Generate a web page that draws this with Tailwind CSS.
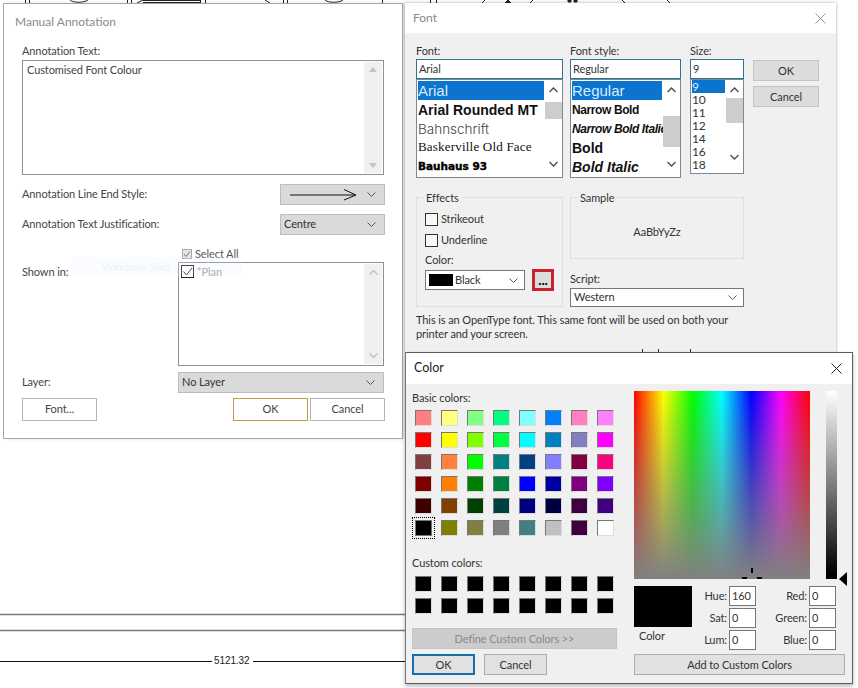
<!DOCTYPE html>
<html lang="en">
<head>
  <meta charset="UTF-8">
  <title>Manual Annotation - Font - Color</title>
  <script src="https://cdn.jsdelivr.net/npm/@tailwindcss/browser@4"></script>
</head>
<body class="bg-white overflow-hidden font-['Lato','Noto_Sans',sans-serif] text-[11px] tracking-[-0.1px] text-[#222]">
<div class="relative w-[858px] h-[688px] overflow-hidden bg-white">

  <!-- drawing behind the dialogs -->
  <svg class="absolute inset-0" width="858" height="688" fill="none" stroke="#222">
    <path d="M25.5 0v3M29.5 0v3M70 0c3 3 14 3 18 0M127.5 0v3M131.5 0v3M137 3l6-3M143 0.5h57M143 2.5h57M200.5 0v3M205.5 0v3M265 0l5 3M283.5 0v3M287.5 0v3M325 0c3 3 14 3 18 0M382.5 0v3"/>
    <path d="M430.5 0v3M436.5 0v3M485 0l-3 3M533 0l-3 3M622 0l3 3M667 0l3 3"/>
    <path d="M508 0l-3 3h6zM568 0h3v2h-3zM574 0h3v2h-3z" fill="#222"/>
    <path d="M0 614.5H405M0 630.5H405" stroke="#777" stroke-width="1.5"/>
    <path d="M0 661.5H212M253 661.5H405" stroke="#111"/>
    <text x="214" y="664" fill="#222" stroke="none" font-family="Liberation Sans" font-size="10">5121.32</text>
  </svg>

  <!-- Manual Annotation -->
  <div class="absolute left-[3px] top-[3px] w-[400px] h-[436px] bg-white border border-[#a6a6a6] shadow-[3px_0_4px_rgba(0,0,0,0.12)] pl-[18px] pr-[17px]">
    <div class="h-[27px] -ml-[7px] pt-[9px] leading-[18px] text-[12px] tracking-normal text-[#8a8a8a]">Manual Annotation</div>
    <div class="h-[18px] mt-[11px] leading-[18px] text-[#444]">Annotation Text:</div>
    <div class="h-[115px] border border-[#8f8f8f] flex justify-between mr-[1px]">
      <div class="pl-[4px] pt-[1px] leading-[16px] text-[#444]">Customised Font Colour</div>
      <div class="w-[18px] m-px bg-[#f0f0f0] flex flex-col items-center justify-between py-[5px]">
        <svg width="8" height="5"><path d="M0 5L4 0 8 5z" fill="#c4c4c4"/></svg>
        <svg width="8" height="5"><path d="M0 0L4 5 8 0z" fill="#c4c4c4"/></svg>
      </div>
    </div>
    <div class="flex items-center justify-between h-[21px] mt-[9px]">
      <span class="text-[#444]">Annotation Line End Style:</span>
      <div class="w-[105px] h-[21px] bg-[#dadada] border border-[#bdbdbd] flex items-center justify-between px-[8px]">
        <svg width="70" height="13" fill="none" stroke="#111"><path d="M1 7H66M55 1.5L67 7 55 12"/></svg>
        <svg width="9" height="5" fill="none" stroke="#555"><path d="M0.5 0.5L4.5 4.5 8.5 0.5"/></svg>
      </div>
    </div>
    <div class="flex items-center justify-between h-[21px] mt-[9px]">
      <span class="text-[#444]">Annotation Text Justification:</span>
      <div class="w-[105px] h-[21px] bg-[#dadada] border border-[#bdbdbd] flex items-center justify-between pl-[3px] pr-[8px]">
        <span class="text-[#333]">Centre</span>
        <svg width="9" height="5" fill="none" stroke="#555"><path d="M0.5 0.5L4.5 4.5 8.5 0.5"/></svg>
      </div>
    </div>
    <div class="flex h-[120px] mt-[11px]">
      <div class="w-[156px] pt-[17px] leading-[18px] text-[#444]">Shown in:</div>
      <div class="w-[206px]">
        <div class="h-[16px] pl-[4px] flex items-center gap-[3px] text-[#555]">
          <span class="w-[10px] h-[10px] border border-[#a8a8a8] bg-[#e4e4e4] flex items-center justify-center">
            <svg width="8" height="8" fill="none" stroke="#777"><path d="M1 4L3 6.5 7 1.5"/></svg>
          </span>
          <span>Select All</span>
        </div>
        <div class="h-[104px] border border-[#8f8f8f] flex justify-between">
          <div class="pl-[2px] pt-[2px] flex items-start gap-[3px] text-[#a0a0a0]">
            <span class="w-[13px] h-[13px] border border-[#222] flex items-center justify-center">
              <svg width="11" height="11" fill="none" stroke="#222"><path d="M1.5 5.5L4.5 9 10 2"/></svg>
            </span>
            <span class="leading-[14px]">*Plan</span>
          </div>
          <div class="w-[18px] m-px bg-[#f0f0f0] flex flex-col items-center justify-between py-[6px]">
            <svg width="9" height="5" fill="none" stroke="#c4c4c4" stroke-width="1.5"><path d="M0.5 4.5L4.5 0.5 8.5 4.5"/></svg>
            <svg width="9" height="5" fill="none" stroke="#c4c4c4" stroke-width="1.5"><path d="M0.5 0.5L4.5 4.5 8.5 0.5"/></svg>
          </div>
        </div>
      </div>
    </div>
    <div class="flex items-center h-[21px] mt-[6px]">
      <span class="w-[156px] text-[#444]">Layer:</span>
      <div class="w-[206px] h-[21px] bg-[#dadada] border border-[#bdbdbd] flex items-center justify-between pl-[3px] pr-[8px]">
        <span class="text-[#333]">No Layer</span>
        <svg width="9" height="5" fill="none" stroke="#555"><path d="M0.5 0.5L4.5 4.5 8.5 0.5"/></svg>
      </div>
    </div>
    <div class="flex h-[23px] mt-[5px]">
      <button class="w-[75px] border border-[#b4b4b4] text-[#444]">Font...</button>
      <button class="w-[75px] ml-[136px] border border-[#c49a45] text-[#444]">OK</button>
      <button class="w-[75px] ml-[2px] border border-[#b4b4b4] text-[#444]">Cancel</button>
    </div>
  </div>
  <!-- ghost of a snip overlay -->
  <div class="absolute left-[72px] top-[257px] w-[170px] h-[19px] pl-[30px] leading-[19px] bg-[#e8f0fd]/20 text-[#e6edfa]/70 pointer-events-none">Windows Snip</div>

  <!-- Font -->
  <div class="absolute left-[405px] top-[3px] w-[431px] h-[350px] bg-[#f0f0f0] shadow-[0_0_3px_rgba(0,0,0,0.35)] text-[#333]">
    <div class="h-[30px] bg-white flex items-center justify-between pl-[8px] pr-[10px] text-[12px] tracking-normal text-[#888]">
      <span>Font</span>
      <svg width="11" height="11" fill="none" stroke="#999"><path d="M0.5 0.5L10.5 10.5M10.5 0.5L0.5 10.5"/></svg>
    </div>
    <div class="flex pl-[11px] pt-[9px]">
      <div class="w-[147px]">
        <div class="h-[17px] leading-[17px]">Font:</div>
        <div class="h-[20px] border border-[#2f7492] bg-white pl-[2px] leading-[18px]">Arial</div>
        <div class="h-[99px] border border-[#7a8a94] bg-white flex tracking-normal">
          <div class="w-[128px] pl-px pt-[1px]">
            <div class="h-[19px] w-[126px] bg-[#0a74cf] text-[#d8ecff] font-['Liberation_Sans'] text-[15px] leading-[19px]">Arial</div>
            <div class="h-[20px] font-['Liberation_Sans'] font-bold text-[14px] text-[#111] leading-[20px] whitespace-nowrap">Arial Rounded MT</div>
            <div class="h-[19px] font-['Inter'] font-light text-[13.5px] text-[#444] leading-[19px]">Bahnschrift</div>
            <div class="h-[19px] font-['Liberation_Serif'] text-[13px] text-[#111] leading-[15px] tracking-[0.2px] whitespace-nowrap">Baskerville Old Face</div>
            <div class="h-[19px] font-['DejaVu_Sans'] font-bold text-[10.5px] text-black leading-[17px] [-webkit-text-stroke:0.4px_black] whitespace-nowrap">Bauhaus 93</div>
          </div>
          <div class="w-[17px] flex flex-col items-center pt-[7px]">
            <svg width="9" height="6" fill="none" stroke="#555" stroke-width="1.5"><path d="M0.5 5L4.5 1 8.5 5"/></svg>
            <div class="w-full h-[17px] bg-[#cdcdcd] mt-[9px]"></div>
            <svg class="mt-[42px]" width="9" height="6" fill="none" stroke="#555" stroke-width="1.5"><path d="M0.5 1L4.5 5 8.5 1"/></svg>
          </div>
        </div>
      </div>
      <div class="w-[111px] ml-[7px]">
        <div class="h-[17px] leading-[17px]">Font style:</div>
        <div class="h-[20px] border border-[#2f7492] bg-white pl-[2px] leading-[18px]">Regular</div>
        <div class="h-[99px] border border-[#7a8a94] bg-white flex tracking-normal">
          <div class="w-[92px] pl-px pt-[1px] overflow-hidden font-['Liberation_Sans'] text-[#111]">
            <div class="h-[19px] w-[90px] bg-[#0a74cf] text-[#d8ecff] text-[15px] leading-[19px]">Regular</div>
            <div class="h-[20px] font-bold text-[12px] leading-[20px] tracking-[-0.4px] whitespace-nowrap">Narrow Bold</div>
            <div class="h-[19px] font-bold italic text-[12px] leading-[19px] tracking-[-0.4px] whitespace-nowrap">Narrow Bold Italic</div>
            <div class="h-[19px] font-bold text-[14px] leading-[19px]">Bold</div>
            <div class="h-[19px] font-bold italic text-[14px] leading-[19px] whitespace-nowrap">Bold Italic</div>
          </div>
          <div class="w-[17px] flex flex-col items-center pt-[7px]">
            <svg width="9" height="6" fill="none" stroke="#555" stroke-width="1.5"><path d="M0.5 5L4.5 1 8.5 5"/></svg>
            <div class="w-full h-[31px] bg-[#cdcdcd] mt-[23px]"></div>
            <svg class="mt-[14px]" width="9" height="6" fill="none" stroke="#555" stroke-width="1.5"><path d="M0.5 1L4.5 5 8.5 1"/></svg>
          </div>
        </div>
      </div>
      <div class="w-[54px] ml-[9px]">
        <div class="h-[17px] leading-[17px]">Size:</div>
        <div class="h-[20px] border border-[#2f7492] bg-white pl-[2px] leading-[18px]">9</div>
        <div class="h-[95px] border border-[#7a8a94] bg-white flex">
          <div class="w-[35px] pl-px text-[12px] leading-[13px] text-[#333]">
            <div class="w-[33px] h-[13px] bg-[#0a74cf] text-[#d8ecff]">9</div>
            <div>10</div><div>11</div><div>12</div><div>14</div><div>16</div><div>18</div>
          </div>
          <div class="w-[17px] flex flex-col items-center pt-[7px]">
            <svg width="9" height="6" fill="none" stroke="#555" stroke-width="1.5"><path d="M0.5 5L4.5 1 8.5 5"/></svg>
            <div class="w-full h-[25px] bg-[#cdcdcd] mt-[5px]"></div>
            <svg class="mt-[31px]" width="9" height="6" fill="none" stroke="#555" stroke-width="1.5"><path d="M0.5 1L4.5 5 8.5 1"/></svg>
          </div>
        </div>
      </div>
      <div class="w-[66px] ml-[9px] pt-[18px] flex flex-col gap-[5px]">
        <button class="h-[21px] bg-[#dcdcdc] border border-[#c4c4c4] leading-[19px]">OK</button>
        <button class="h-[21px] bg-[#dcdcdc] border border-[#c4c4c4] leading-[19px]">Cancel</button>
      </div>
    </div>
    <div class="flex pl-[11px] mt-[19px]">
      <div class="relative w-[147px] h-[110px] border border-[#dedede] pl-[8px] pt-[15px]">
        <span class="absolute left-[7px] -top-[8px] px-[2px] bg-[#f0f0f0] leading-[16px]">Effects</span>
        <div class="flex items-center gap-[3px] h-[13px]">
          <span class="w-[13px] h-[13px] border border-[#333] bg-[#f8f8f8]"></span><span>Strikeout</span>
        </div>
        <div class="flex items-center gap-[3px] h-[13px] mt-[8px]">
          <span class="w-[13px] h-[13px] border border-[#333] bg-[#f8f8f8]"></span><span>Underline</span>
        </div>
        <div class="h-[14px] leading-[14px] mt-[6px]">Color:</div>
        <div class="flex items-center mt-[2px]">
          <div class="w-[100px] h-[20px] border border-[#777] bg-white flex items-center pl-[3px] pr-[6px]">
            <span class="w-[24px] h-[12px] bg-black"></span>
            <span class="ml-[2px] grow leading-[16px]">Black</span>
            <svg width="9" height="5" fill="none" stroke="#555"><path d="M0.5 0.5L4.5 4.5 8.5 0.5"/></svg>
          </div>
          <button class="w-[22px] h-[22px] ml-[7px] bg-[#dcdcdc] border-[3px] border-[#c8202e] font-bold text-black text-[14px] leading-[16px]">...</button>
        </div>
      </div>
      <div class="w-[174px] ml-[7px]">
        <div class="relative h-[62px] border border-[#dedede] flex items-center justify-center">
          <span class="absolute left-[7px] -top-[8px] px-[2px] bg-[#f0f0f0] leading-[16px]">Sample</span>
          <span class="mt-[9px]">AaBbYyZz</span>
        </div>
        <div class="h-[15px] leading-[15px] mt-[12px]">Script:</div>
        <div class="h-[19px] mt-[2px] border border-[#777] bg-white flex items-center justify-between pl-[3px] pr-[6px]">
          <span>Western</span>
          <svg width="9" height="5" fill="none" stroke="#555"><path d="M0.5 0.5L4.5 4.5 8.5 0.5"/></svg>
        </div>
      </div>
    </div>
    <p class="ml-[11px] mt-[6px] w-[330px] leading-[14px]">This is an OpenType font. This same font will be used on both your printer and your screen.</p>
  </div>
  <svg class="absolute left-[640px] top-[349px]" width="52" height="4" stroke="#333"><path d="M2.5 0v4M18.5 0v4M50.5 0v4"/></svg>

  <!-- Color -->
  <div class="absolute left-[405px] top-[352px] w-[448px] h-[332px] bg-[#f0f0f0] border border-[#5c5c5c] border-l-[#7a7a7a] shadow-[0_2px_4px_rgba(0,0,0,0.3)] text-[#333]">
    <div class="h-[31px] bg-white flex items-center justify-between pl-[8px] pr-[10px] text-[#222] text-[12.5px] tracking-normal">
      <span>Color</span>
      <svg width="11" height="11" fill="none" stroke="#222"><path d="M0.5 0.5L10.5 10.5M10.5 0.5L0.5 10.5"/></svg>
    </div>
    <div class="flex">
      <div class="w-[228px] pl-[6px]">
        <div class="h-[14px] leading-[14px] mt-[7px]">Basic colors:</div>
        <div class="grid grid-cols-[repeat(8,17px)] auto-rows-[16px] gap-x-[9px] gap-y-[6px] ml-[3px] mt-[5px]">
          <i class="border border-t-[#777] border-l-[#777] border-r-[#ddd] border-b-[#ddd] bg-[#ff8080]"></i>
          <i class="border border-t-[#777] border-l-[#777] border-r-[#ddd] border-b-[#ddd] bg-[#ffff80]"></i>
          <i class="border border-t-[#777] border-l-[#777] border-r-[#ddd] border-b-[#ddd] bg-[#80ff80]"></i>
          <i class="border border-t-[#777] border-l-[#777] border-r-[#ddd] border-b-[#ddd] bg-[#00ff80]"></i>
          <i class="border border-t-[#777] border-l-[#777] border-r-[#ddd] border-b-[#ddd] bg-[#80ffff]"></i>
          <i class="border border-t-[#777] border-l-[#777] border-r-[#ddd] border-b-[#ddd] bg-[#0080ff]"></i>
          <i class="border border-t-[#777] border-l-[#777] border-r-[#ddd] border-b-[#ddd] bg-[#ff80c0]"></i>
          <i class="border border-t-[#777] border-l-[#777] border-r-[#ddd] border-b-[#ddd] bg-[#ff80ff]"></i>
          <i class="border border-t-[#777] border-l-[#777] border-r-[#ddd] border-b-[#ddd] bg-[#ff0000]"></i>
          <i class="border border-t-[#777] border-l-[#777] border-r-[#ddd] border-b-[#ddd] bg-[#ffff00]"></i>
          <i class="border border-t-[#777] border-l-[#777] border-r-[#ddd] border-b-[#ddd] bg-[#80ff00]"></i>
          <i class="border border-t-[#777] border-l-[#777] border-r-[#ddd] border-b-[#ddd] bg-[#00ff40]"></i>
          <i class="border border-t-[#777] border-l-[#777] border-r-[#ddd] border-b-[#ddd] bg-[#00ffff]"></i>
          <i class="border border-t-[#777] border-l-[#777] border-r-[#ddd] border-b-[#ddd] bg-[#0080c0]"></i>
          <i class="border border-t-[#777] border-l-[#777] border-r-[#ddd] border-b-[#ddd] bg-[#8080c0]"></i>
          <i class="border border-t-[#777] border-l-[#777] border-r-[#ddd] border-b-[#ddd] bg-[#ff00ff]"></i>
          <i class="border border-t-[#777] border-l-[#777] border-r-[#ddd] border-b-[#ddd] bg-[#804040]"></i>
          <i class="border border-t-[#777] border-l-[#777] border-r-[#ddd] border-b-[#ddd] bg-[#ff8040]"></i>
          <i class="border border-t-[#777] border-l-[#777] border-r-[#ddd] border-b-[#ddd] bg-[#00ff00]"></i>
          <i class="border border-t-[#777] border-l-[#777] border-r-[#ddd] border-b-[#ddd] bg-[#008080]"></i>
          <i class="border border-t-[#777] border-l-[#777] border-r-[#ddd] border-b-[#ddd] bg-[#004080]"></i>
          <i class="border border-t-[#777] border-l-[#777] border-r-[#ddd] border-b-[#ddd] bg-[#8080ff]"></i>
          <i class="border border-t-[#777] border-l-[#777] border-r-[#ddd] border-b-[#ddd] bg-[#800040]"></i>
          <i class="border border-t-[#777] border-l-[#777] border-r-[#ddd] border-b-[#ddd] bg-[#ff0080]"></i>
          <i class="border border-t-[#777] border-l-[#777] border-r-[#ddd] border-b-[#ddd] bg-[#800000]"></i>
          <i class="border border-t-[#777] border-l-[#777] border-r-[#ddd] border-b-[#ddd] bg-[#ff8000]"></i>
          <i class="border border-t-[#777] border-l-[#777] border-r-[#ddd] border-b-[#ddd] bg-[#008000]"></i>
          <i class="border border-t-[#777] border-l-[#777] border-r-[#ddd] border-b-[#ddd] bg-[#008040]"></i>
          <i class="border border-t-[#777] border-l-[#777] border-r-[#ddd] border-b-[#ddd] bg-[#0000ff]"></i>
          <i class="border border-t-[#777] border-l-[#777] border-r-[#ddd] border-b-[#ddd] bg-[#0000a0]"></i>
          <i class="border border-t-[#777] border-l-[#777] border-r-[#ddd] border-b-[#ddd] bg-[#800080]"></i>
          <i class="border border-t-[#777] border-l-[#777] border-r-[#ddd] border-b-[#ddd] bg-[#8000ff]"></i>
          <i class="border border-t-[#777] border-l-[#777] border-r-[#ddd] border-b-[#ddd] bg-[#400000]"></i>
          <i class="border border-t-[#777] border-l-[#777] border-r-[#ddd] border-b-[#ddd] bg-[#804000]"></i>
          <i class="border border-t-[#777] border-l-[#777] border-r-[#ddd] border-b-[#ddd] bg-[#004000]"></i>
          <i class="border border-t-[#777] border-l-[#777] border-r-[#ddd] border-b-[#ddd] bg-[#004040]"></i>
          <i class="border border-t-[#777] border-l-[#777] border-r-[#ddd] border-b-[#ddd] bg-[#000080]"></i>
          <i class="border border-t-[#777] border-l-[#777] border-r-[#ddd] border-b-[#ddd] bg-[#000040]"></i>
          <i class="border border-t-[#777] border-l-[#777] border-r-[#ddd] border-b-[#ddd] bg-[#400040]"></i>
          <i class="border border-t-[#777] border-l-[#777] border-r-[#ddd] border-b-[#ddd] bg-[#400080]"></i>
          <i class="border border-[#777] bg-black outline-1 outline-dotted outline-black outline-offset-2"></i>
          <i class="border border-t-[#777] border-l-[#777] border-r-[#ddd] border-b-[#ddd] bg-[#808000]"></i>
          <i class="border border-t-[#777] border-l-[#777] border-r-[#ddd] border-b-[#ddd] bg-[#808040]"></i>
          <i class="border border-t-[#777] border-l-[#777] border-r-[#ddd] border-b-[#ddd] bg-[#808080]"></i>
          <i class="border border-t-[#777] border-l-[#777] border-r-[#ddd] border-b-[#ddd] bg-[#408080]"></i>
          <i class="border border-t-[#777] border-l-[#777] border-r-[#ddd] border-b-[#ddd] bg-[#c0c0c0]"></i>
          <i class="border border-t-[#777] border-l-[#777] border-r-[#ddd] border-b-[#ddd] bg-[#400040]"></i>
          <i class="border border-t-[#777] border-l-[#777] border-r-[#ddd] border-b-[#ddd] bg-[#ffffff]"></i>
        </div>
        <div class="h-[14px] leading-[14px] mt-[20px]">Custom colors:</div>
        <div class="grid grid-cols-[repeat(8,17px)] auto-rows-[16px] gap-x-[9px] gap-y-[6px] ml-[3px] mt-[6px]">
          <i class="border border-t-[#777] border-l-[#777] border-r-[#ddd] border-b-[#ddd] bg-black"></i>
          <i class="border border-t-[#777] border-l-[#777] border-r-[#ddd] border-b-[#ddd] bg-black"></i>
          <i class="border border-t-[#777] border-l-[#777] border-r-[#ddd] border-b-[#ddd] bg-black"></i>
          <i class="border border-t-[#777] border-l-[#777] border-r-[#ddd] border-b-[#ddd] bg-black"></i>
          <i class="border border-t-[#777] border-l-[#777] border-r-[#ddd] border-b-[#ddd] bg-black"></i>
          <i class="border border-t-[#777] border-l-[#777] border-r-[#ddd] border-b-[#ddd] bg-black"></i>
          <i class="border border-t-[#777] border-l-[#777] border-r-[#ddd] border-b-[#ddd] bg-black"></i>
          <i class="border border-t-[#777] border-l-[#777] border-r-[#ddd] border-b-[#ddd] bg-black"></i>
          <i class="border border-t-[#777] border-l-[#777] border-r-[#ddd] border-b-[#ddd] bg-black"></i>
          <i class="border border-t-[#777] border-l-[#777] border-r-[#ddd] border-b-[#ddd] bg-black"></i>
          <i class="border border-t-[#777] border-l-[#777] border-r-[#ddd] border-b-[#ddd] bg-black"></i>
          <i class="border border-t-[#777] border-l-[#777] border-r-[#ddd] border-b-[#ddd] bg-black"></i>
          <i class="border border-t-[#777] border-l-[#777] border-r-[#ddd] border-b-[#ddd] bg-black"></i>
          <i class="border border-t-[#777] border-l-[#777] border-r-[#ddd] border-b-[#ddd] bg-black"></i>
          <i class="border border-t-[#777] border-l-[#777] border-r-[#ddd] border-b-[#ddd] bg-black"></i>
          <i class="border border-t-[#777] border-l-[#777] border-r-[#ddd] border-b-[#ddd] bg-black"></i>
        </div>
        <button class="block w-[205px] h-[21px] mt-[14px] bg-[#cccccc] border border-[#c4c4c4] text-[#8a8a8a] leading-[19px]">Define Custom Colors &gt;&gt;</button>
        <div class="flex gap-[9px] mt-[5px]">
          <button class="w-[63px] h-[21px] bg-[#e1e1e1] border-2 border-[#1a6ea8] leading-[17px]">OK</button>
          <button class="w-[63px] h-[21px] bg-[#e1e1e1] border border-[#adadad] leading-[19px]">Cancel</button>
        </div>
      </div>
      <div class="w-[218px]">
        <div class="flex pt-[7px]">
          <div class="w-[176px] h-[188px] bg-[linear-gradient(to_right,#f00,#ff0,#0f0,#0ff,#00f,#f0f,#f00)]">
            <div class="relative h-full bg-[linear-gradient(to_bottom,#80808000,#808080)]">
              <svg class="absolute left-[108px] top-[177px]" width="20" height="11" fill="#000"><path d="M9 0h2v5H9zM0 9h5v2H0zM15 9h5v2h-5z"/></svg>
            </div>
          </div>
          <div class="w-[11px] h-[188px] ml-[16px] bg-[linear-gradient(to_bottom,#fff,#000_97%)]"></div>
          <svg class="mt-[181px] ml-[2px]" width="8" height="14" fill="#000"><path d="M8 0v14L0 7z"/></svg>
        </div>
        <div class="flex">
          <div class="w-[58px]">
            <div class="h-[41px] bg-black"></div>
            <div class="pl-[5px] mt-[2px] leading-[14px]">Color</div>
          </div>
          <div class="grid grid-cols-[36px_27px] auto-rows-[20px] gap-y-[2px] items-center ml-[1px] text-right">
            <span class="pr-[2px]">Hue:</span><span class="h-[20px] border border-[#777] bg-white text-left pl-[2px] leading-[18px]">160</span>
            <span class="pr-[2px]">Sat:</span><span class="h-[20px] border border-[#777] bg-white text-left pl-[2px] leading-[18px]">0</span>
            <span class="pr-[2px]">Lum:</span><span class="h-[20px] border border-[#777] bg-white text-left pl-[2px] leading-[18px]">0</span>
          </div>
          <div class="grid grid-cols-[53px_27px] auto-rows-[20px] gap-y-[2px] items-center text-right">
            <span class="pr-[2px]">Red:</span><span class="h-[20px] border border-[#777] bg-white text-left pl-[2px] leading-[18px]">0</span>
            <span class="pr-[2px]">Green:</span><span class="h-[20px] border border-[#777] bg-white text-left pl-[2px] leading-[18px]">0</span>
            <span class="pr-[2px]">Blue:</span><span class="h-[20px] border border-[#777] bg-white text-left pl-[2px] leading-[18px]">0</span>
          </div>
        </div>
        <button class="block w-[211px] h-[21px] mt-[4px] bg-[#e1e1e1] border border-[#adadad] leading-[19px]">Add to Custom Colors</button>
      </div>
    </div>
  </div>
</div>
</body>
</html>
